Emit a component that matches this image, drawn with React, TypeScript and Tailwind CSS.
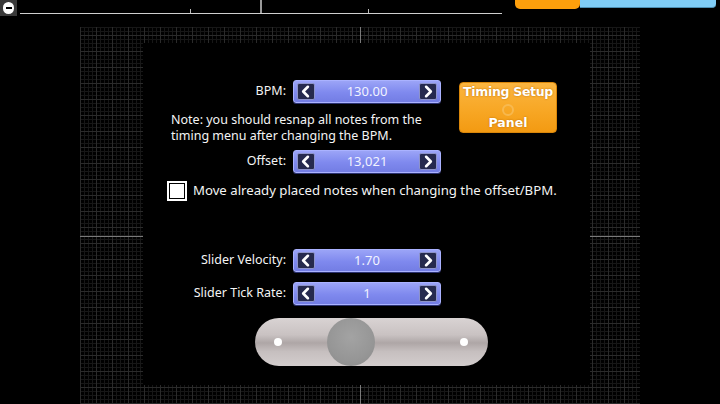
// Timing setup dialog of a rhythm-game editor, over the editor grid.
import React from "react";

const FONT = "font-['Noto_Sans',_'DejaVu_Sans',_sans-serif]";

function Chevron({ dir }: { dir: "left" | "right" }) {
  const pts = dir === "left" ? "10.5,3.5 5.5,8.5 10.5,13.5" : "6.5,3.5 11.5,8.5 6.5,13.5";
  return (
    <div className="flex h-[17px] w-[18px] items-center justify-center rounded-[2px] border border-[#8d93c9] bg-[#262a4e]">
      <svg width="17" height="17" viewBox="0 0 17 17">
        <polyline points={pts} fill="none" stroke="#ffffff" strokeWidth="2.8" strokeLinecap="round" strokeLinejoin="round" />
      </svg>
    </div>
  );
}

// Un champ numérique : deux flèches et la valeur au centre.
function Spinner({ value }: { value: string }) {
  return (
    <div className="flex h-[23px] w-[148px] items-center justify-between rounded-[3px] border border-[#aab2ff] bg-[linear-gradient(180deg,#9ba4f7_0%,#7f89ee_55%,#737de4_100%)] px-[3px] shadow-[0_1px_0_#2b3170]">
      <Chevron dir="left" />
      <span className="text-[13px] leading-none text-[#f2f3ff]">{value}</span>
      <Chevron dir="right" />
    </div>
  );
}

function Row({ label, value }: { label: string; value: string }) {
  return (
    <div className="flex items-center gap-[7px]">
      <span className="w-[115px] text-right text-[12.5px] leading-none text-[#f4f4f4]">{label}</span>
      <Spinner value={value} />
    </div>
  );
}

function TopBar() {
  return (
    <div className="flex h-[20px] items-start">
      <div className="flex h-[16px] w-[17px] items-center justify-center bg-[#3a3a3a]">
        <div className="flex h-[12px] w-[11px] items-center justify-center rounded-full bg-white">
          <div className="h-[2px] w-[6px] bg-black" />
        </div>
      </div>
      {/* La ligne de temps et ses repères */}
      <div className="relative ml-[3px] h-[14px] w-[482px] border-b border-[#cfcfcf]">
        <div className="absolute bottom-0 left-[170px] h-[4px] w-px bg-[#bdbdbd]" />
        <div className="absolute bottom-0 left-[240px] h-[14px] w-[2px] bg-[#9a9a9a]" />
        <div className="absolute bottom-0 left-[348px] h-[4px] w-px bg-[#bdbdbd]" />
      </div>
      <div className="ml-[13px] h-[9px] w-[65px] rounded-b-[5px] bg-[#fd9f0c]" />
      <div className="h-[8px] w-[136px] rounded-br-[4px] border-b border-[#4d8fb3] bg-[#80cdf6]" />
    </div>
  );
}

export default function App() {
  return (
    <div className={`h-[404px] w-[720px] overflow-hidden bg-black ${FONT}`}>
      <TopBar />
      <div className="ml-[80px] mt-[7px] w-[560px]">
        <div className="relative h-[377px] bg-[repeating-linear-gradient(90deg,#2b2b2b_0_1px,transparent_1px_16px),repeating-linear-gradient(0deg,#2b2b2b_0_1px,transparent_1px_16px),repeating-linear-gradient(90deg,#171717_0_1px,transparent_1px_4px),repeating-linear-gradient(0deg,#171717_0_1px,transparent_1px_4px)] pl-[63px] pr-[50px] pt-[16px]">
          {/* Axes centraux de la grille */}
          <div className="absolute left-[280px] top-0 h-full w-px bg-[#7a7a7a]" />
          <div className="absolute left-0 top-[209px] h-px w-full bg-[#7a7a7a]" />

          <div className="relative h-[342px] bg-black pl-[28px] pt-[37px]">
            <div className="flex items-start gap-[18px]">
              <div className="flex flex-col">
                <Row label="BPM:" value="130.00" />
                <div className="mt-[9px] flex flex-col text-[12.5px] leading-[16px] text-[#f4f4f4]">
                  <span>Note: you should resnap all notes from the</span>
                  <span>timing menu after changing the BPM.</span>
                </div>
                <div className="mt-[6px]">
                  <Row label="Offset:" value="13,021" />
                </div>
              </div>
              <div className="relative mt-[2px] flex h-[51px] w-[98px] flex-col items-center justify-between rounded-[4px] border border-[#d9860a] bg-[linear-gradient(180deg,#fbb540_0%,#f7a623_60%,#f39a12_100%)] pb-[1px] font-['DejaVu_Sans',_sans-serif] text-[12.5px] font-bold leading-[17px] text-white [text-shadow:0_0_2px_#b86a00]">
                <span className="tracking-[-0.3px]">Timing Setup</span>
                <div className="absolute left-[42px] top-[21px] h-[12px] w-[12px] rounded-full border-2 border-[#f9c46a] opacity-60" />
                <span>Panel</span>
              </div>
            </div>

            <label className="ml-[-4px] mt-[8px] flex items-center gap-[6px]">
              <div className="h-[20px] w-[20px] border-2 border-white p-px">
                <div className="h-full w-full bg-white" />
              </div>
              <span className="text-[13.2px] text-[#f4f4f4]">Move already placed notes when changing the offset/BPM.</span>
            </label>

            <div className="mt-[48px] flex flex-col gap-[10px]">
              <Row label="Slider Velocity:" value="1.70" />
              <Row label="Slider Tick Rate:" value="1" />
            </div>

            {/* Curseur de défilement */}
            <div className="ml-[84px] mt-[13px] flex h-[48px] w-[233px] items-center rounded-full bg-[linear-gradient(180deg,#d9d3d3_0%,#c9c2c2_35%,#aea6a6_52%,#c6bfbf_70%,#d3cdcd_100%)]">
              <div className="ml-[19px] h-[8px] w-[8px] rounded-full bg-white" />
              <div className="ml-[45px] h-[48px] w-[48px] rounded-full bg-[radial-gradient(circle_at_50%_40%,#a3a3a3_0%,#969696_60%,#8a8a8a_100%)]" />
              <div className="ml-[85px] h-[8px] w-[8px] rounded-full bg-white" />
            </div>
          </div>
        </div>
      </div>
    </div>
  );
}
